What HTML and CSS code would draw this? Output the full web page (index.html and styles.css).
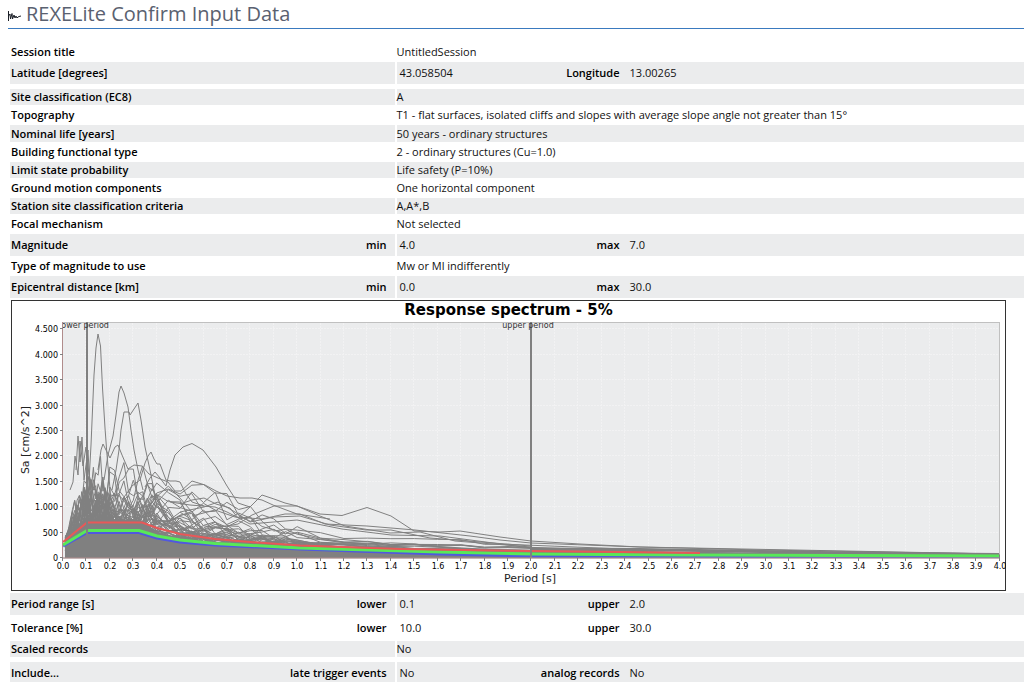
FILE: index.html
```html
<!DOCTYPE html>
<html lang="en">
<head>
<meta charset="utf-8">
<title>REXELite Confirm Input Data</title>
<link rel="stylesheet" href="styles.css">
</head>
<body>
<header class="page-head">
  <svg class="logo" width="13" height="12" viewBox="0 0 13 12" aria-hidden="true">
    <path d="M.5 1V11M.5 6L2 4L2.500 9L4 3.500L4.500 9L6 5L7 8L8 6L9 8L10 7L11 6.500L13 6"/>
  </svg>
  <h1>REXELite Confirm Input Data</h1>
</header>
<main>
<table class="data">
  <colgroup><col class="col-label"><col></colgroup>
  <tbody>
  <tr><th scope="row">Session title</th><td>UntitledSession</td></tr>
  <tr class="band tall"><th scope="row">Latitude [degrees]</th><td><div class="pair"><span>43.058504</span><b>Longitude</b><span>13.00265</span></div></td></tr>
  <tr class="spacer"><td colspan="2"></td></tr>
  <tr class="band"><th scope="row">Site classification (EC8)</th><td>A</td></tr>
  <tr><th scope="row">Topography</th><td>T1 - flat surfaces, isolated cliffs and slopes with average slope angle not greater than 15°</td></tr>
  <tr class="band roomy"><th scope="row">Nominal life [years]</th><td>50 years - ordinary structures</td></tr>
  <tr><th scope="row">Building functional type</th><td>2 - ordinary structures (Cu=1.0)</td></tr>
  <tr class="band"><th scope="row">Limit state probability</th><td>Life safety (P=10%)</td></tr>
  <tr><th scope="row">Ground motion components</th><td>One horizontal component</td></tr>
  <tr class="band"><th scope="row">Station site classification criteria</th><td>A,A*,B</td></tr>
  <tr><th scope="row">Focal mechanism</th><td>Not selected</td></tr>
  <tr class="band tall"><th scope="row"><div class="split"><span>Magnitude</span><span>min</span></div></th><td><div class="pair"><span>4.0</span><b>max</b><span>7.0</span></div></td></tr>
  <tr><th scope="row">Type of magnitude to use</th><td>Mw or Ml indifferently</td></tr>
  <tr class="band tall"><th scope="row"><div class="split"><span>Epicentral distance [km]</span><span>min</span></div></th><td><div class="pair"><span>0.0</span><b>max</b><span>30.0</span></div></td></tr>
  <tr><td colspan="2" class="chart-cell">
    <svg class="chart" viewBox="11 300 995 291" role="img" aria-label="Response spectrum - 5%">
      <defs><clipPath id="plot"><rect x="63" y="322" width="937" height="236"/></clipPath></defs>
      <rect class="frame" x="11.500" y="300.500" width="994" height="290"/>
      <text class="chart-title" x="508.500" y="315">Response spectrum - 5%</text>
      <rect class="plot-area" x="62.500" y="322.500" width="937" height="235.500"/>
      <g id="grid"></g>
      <g clip-path="url(#plot)">
        <polygon class="mass" points="65,558 65,538 75,527 87,518 140,520 158,532 190,541 240,545 300,548 400,551 531,551 999,556 999,558"/>
        <g id="records" class="records"></g>
        <g class="records">
          <polyline points="84,510 88,500 91,445 94,375 96,348 98,334 100.500,346 102.500,388 105,428 107,455 111,500 118,520"/>
          <polyline points="104,480 108,455 113,436 116,415 119,392 121,386 124,393 128,407 131,430 134,450 138,470 143,490"/>
          <polyline points="112,490 116,470 119,450 121,430 124,412 129,412 130,415 134,409 138,403 141,420 145,447 150,470 156,500"/>
          <polyline points="122,500 132,486 140,480 145,463 148,456 151,452 154,459 157,464 160,464 166,480 170,481 176,481 180,482 186,494 192,502 204,506"/>
          <polyline points="145,487 150,478 155,472 160,478 166,486 170,470 175,455 183,447 192,443.500 203,450 216,467 227,486 238,503 250,507"/>
          <polyline points="98,470 101,450 103,444 106,450 110,458 115,447 118,445 122,455 128,469 134,465 142,466 149,474 158,478 168,482 175,491 181,491 192,481 205,485 216,491 227,496 240,498 252,498 262,500 273,505 297,514 330,519"/>
          <polyline points="180,504 192,500 204,498 216,504 230,508 238,518 250,507 262,495 274,499 285,503 297,506 320,514 342,515.500 367,507.500 391,516 414,531 440,532 460,531 500,537 531,541 580,544 640,547 760,550 880,552 999,554"/>
          <polyline points="227,526 238,524 252,515 274,506 297,506 320,516 345,526 390,533 420,532 455,541 531,547"/>
          <polyline points="192,516 215,510 235,517 262,519 285,514 300,514 325,524 367,526 391,528 415,530 470,536 500,540 531,543 640,547 999,554"/>
          <polyline points="180,512 204,507 218,502 235,512 250,522 274,517 300,516 330,525 366,530 391,530 430,538 531,546"/>
          <polyline points="170,502 190,505 215,507 227,512 250,524 297,520 342,529 391,535 440,536 531,548"/>
          <polyline points="76,470 78,436 80,462 82,437 84,480 88,450 90,490"/>
          <polyline points="70,490 73,482 75,456 78,475 80,441 83,466 86,447 89,475 93,488"/>
        </g>
        <path class="overlap" d="M531 549L640 549.500L760 551.500L880 553.500L999 554.500"/>
        <polyline class="target blue" points="63,546 87,532.500 139,532.500 157,538 180,542 215,545 300,549 440,554 531,556 999,557"/>
        <polyline class="target green" points="63,545 87,530.500 139,530.500 157,536 180,540 215,543.500 300,548 440,552 531,554 680,555 999,556"/>
        <polyline class="target red" points="63,542 87,522.500 142,522.500 157,528 180,534 215,539 250,542 300,545.500 400,549 531,551 620,552 700,553"/>
        <path class="marker" d="M87 322V558M531 322V558"/>
      </g>
      <path class="axis" d="M62.500 322V558H999.500"/>
      <g class="marker-label" clip-path="url(#plot)"><text x="84" y="328">lower period</text><text x="528" y="328">upper period</text></g>
      <g id="ticks" class="ticks"></g>
      <text class="axis-title" x="530" y="582">Period [s]</text>
      <text class="axis-title" transform="translate(29 440) rotate(-90)">Sa [cm/s^2]</text>
    </svg>
  </td></tr>
  <tr class="band tall"><th scope="row"><div class="split"><span>Period range [s]</span><span>lower</span></div></th><td><div class="pair"><span>0.1</span><b>upper</b><span>2.0</span></div></td></tr>
  <tr class="tall"><th scope="row"><div class="split"><span>Tolerance [%]</span><span>lower</span></div></th><td><div class="pair"><span>10.0</span><b>upper</b><span>30.0</span></div></td></tr>
  <tr class="band"><th scope="row">Scaled records</th><td>No</td></tr>
  <tr class="spacer"><td colspan="2"></td></tr>
  <tr class="band tall"><th scope="row"><div class="split"><span>Include...</span><span>late trigger events</span></div></th><td><div class="pair"><span>No</span><b>analog records</b><span>No</span></div></td></tr>
  </tbody>
</table>
</main>
<script src="chart.js"></script>
</body>
</html>
```
FILE: styles.css
```css
* { box-sizing: border-box; }
body {
  margin: 0;
  background: #fff;
  color: #111;
  font: 11px/16px "Open Sans", sans-serif;
  overflow: hidden;
}
.page-head {
  display: flex;
  align-items: center;
  gap: 5px;
  height: 29px;
  margin-left: 8px;
  border-bottom: 1px solid #3a7abf;
}
.page-head h1 {
  margin: 0;
  font-size: 20px;
  line-height: 28px;
  font-weight: 400;
  color: #5a6170;
}
.logo { margin-top: 3px; }
.logo path { fill: none; stroke: #1c2028; stroke-width: 1; }
main { padding: 13px 0 0 8px; }
.data {
  width: calc(100% + 2px);
  table-layout: fixed;
  border-collapse: separate;
  border-spacing: 2px;
}
.col-label { width: 38%; }
.data th, .data td { padding: 0; height: 16px; text-align: left; vertical-align: middle; }
.data th { padding-left: 1px; color: #000; font-weight: 600; }
.data .band th, .data .band td { background: #ebeced; }
.data .roomy th, .data .roomy td { height: 17px; }
.data .tall th, .data .tall td { height: 22px; }
.data .spacer td { height: 1px; line-height: 1px; }
.split { display: flex; justify-content: space-between; padding-right: 8px; }
.pair { display: grid; grid-template-columns: 110px 108px 1fr; column-gap: 2px; padding-left: 3px; }
.pair b { text-align: right; color: #000; font-weight: 600; }
.pair span:last-child { padding-left: 8px; }
.data .chart-cell { padding: 0 1px; line-height: 0; }
.chart { display: block; width: 100%; max-width: 995px; font-family: "DejaVu Sans", sans-serif; }
.frame { fill: #fff; stroke: #333; }
.plot-area { fill: #ebeced; stroke: #c0c0c0; }
.grid-line { stroke: #f2f2f3; stroke-width: 1; stroke-dasharray: 2 1; }
.mass { fill: #808080; }
.records polyline { fill: none; stroke: #808080; stroke-width: 1; }
.overlap { fill: none; stroke: #808080; stroke-width: 3; }
.target { fill: none; stroke-width: 3; }
.red { stroke: #e85858; stroke-width: 2; }
.green { stroke: #58e858; }
.blue { stroke: #5058e0; }
.marker { fill: none; stroke: #808080; stroke-width: 2; }
.axis { fill: none; stroke: #b08c8c; }
.chart-title { font-size: 15px; font-weight: 700; text-anchor: middle; }
.axis-title { font-size: 11px; text-anchor: middle; fill: #222; }
.marker-label { font-size: 8px; text-anchor: middle; fill: #333; }
.ticks { font-size: 8px; fill: #000; }
.ticks path { stroke: #808080; }
.ticks .x { text-anchor: middle; }
.ticks .y { text-anchor: end; }
```
FILE: chart.js
```js
const NS = "http://www.w3.org/2000/svg";
const X0 = 63, XSCALE = 234.2, Y0 = 558, YSCALE = 0.0508;
const px = t => X0 + t * XSCALE;
const py = a => Y0 - a * YSCALE;

function add(parent, tag, attrs, text) {
  const el = document.createElementNS(NS, tag);
  for (const k in attrs) el.setAttribute(k, attrs[k]);
  if (text) el.textContent = text;
  parent.appendChild(el);
}

const grid = document.getElementById("grid");
const ticks = document.getElementById("ticks");
for (let i = 0; i <= 40; i++) {
  const x = Math.round(px(i / 10)) - 0.5;
  if (i > 0 && i < 40) add(grid, "path", { class: "grid-line", d: `M${x} 323V558` });
  add(ticks, "path", { d: `M${x} 558v3` });
  add(ticks, "text", { class: "x", x: x + 0.5, y: 569 }, (i / 10).toFixed(1));
}
for (let a = 0; a <= 4500; a += 500) {
  const y = Math.round(py(a)) - 0.5;
  if (a > 0) add(grid, "path", { class: "grid-line", d: `M63 ${y}H999` });
  add(ticks, "path", { d: `M60 ${y}h3` });
  const label = a < 1000 ? String(a) : (a / 1000).toFixed(3);
  add(ticks, "text", { class: "y", x: 58, y: y + 3.5 }, label);
}

/* Seeded generator, so the records are the same on each load. */
let seed = 20117;
const rnd = () => {
  seed = (seed * 1664525 + 1013904223) % 4294967296;
  return seed / 4294967296;
};

const periods = [];
for (let t = 0.01; t < 0.2; t += 0.01) periods.push(t);
for (let t = 0.2; t < 0.4; t += 0.02) periods.push(t);
for (let t = 0.4; t < 1; t += 0.05) periods.push(t);
for (let t = 1; t <= 2; t += 0.1) periods.push(t);
periods.push(2.5, 3, 3.5, 4);

const records = document.getElementById("records");
for (let n = 0; n < 88; n++) {
  const amp = 280 + 880 * Math.pow(rnd(), 1.9);
  const corner = 0.2 + 0.38 * rnd();
  const power = 1 + 0.5 * rnd();
  let wave = 0;
  const points = periods.map(t => {
    wave = 0.7 * wave + (rnd() - 0.5) * (t < 0.03 ? 0.2 : 0.7);
    let shape = Math.min(1, 0.3 + t * 7);
    if (t > corner) shape *= Math.pow(corner / t, power);
    if (t > 2) shape *= Math.pow(2 / t, 0.6);
    const damp = t > 1 ? 0.4 : 1;
    return `${px(t).toFixed(1)},${py(amp * shape * Math.exp(wave * damp)).toFixed(1)}`;
  });
  add(records, "polyline", { points: points.join(" ") });
}
```
